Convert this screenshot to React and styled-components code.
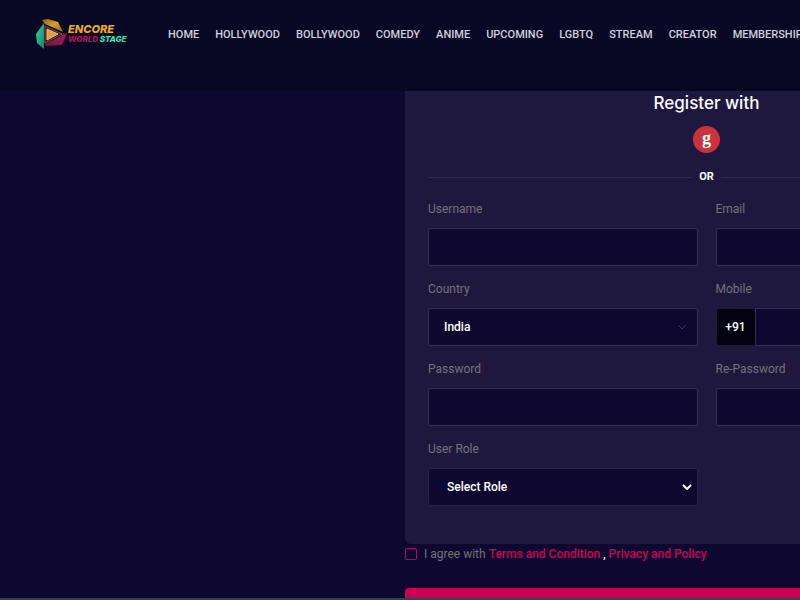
import React from "react";
import styled, { createGlobalStyle } from "styled-components";

const GlobalStyle = createGlobalStyle`
  *, *::before, *::after { box-sizing: border-box; }
  body {
    margin: 0;
    background: #0e0830;
    color: #fff;
    font-family: Roboto, "Liberation Sans", sans-serif;
    font-size: 12px;
  }
`;

const Page = styled.div`
  display: flex;
  flex-direction: column;
  height: 100vh;
  overflow: hidden;
`;

const Header = styled.header`
  display: flex;
  align-items: flex-start;
  flex: none;
  height: 91px;
  padding: 14px 36px;
  background: #080724;
`;

const Logo = styled.a`
  display: flex;
  align-items: center;
  flex: none;
  width: 132px;
  height: 40px;
  text-decoration: none;
`;

const LogoMark = styled.svg`
  flex: none;
  width: 32px;
  height: 32px;
`;

const LogoWords = styled.span`
  display: flex;
  flex-direction: column;
  font-family: Inter, "Open Sans", sans-serif;
  font-style: italic;
  font-weight: 800;
  white-space: nowrap;
`;

const LogoLine = styled.span`
  font-size: ${(p) => (p.$small ? 8 : 11)}px;
  line-height: ${(p) => (p.$small ? 9 : 11)}px;
  color: ${(p) => p.$color};
`;

const Accent = styled.span`
  color: #2eeaa5;
`;

const Nav = styled.nav`
  display: flex;
  align-items: center;
  gap: 16px;
  height: 41px;
`;

const NavLink = styled.a`
  color: #d3d1de;
  font-size: 11px;
  font-weight: 500;
  line-height: 16px;
  text-decoration: none;
  white-space: nowrap;
`;

const Main = styled.main`
  display: flex;
  justify-content: center;
  flex: 1;
  min-width: 1413px;
  min-height: 0;
  overflow: hidden;
`;

const Form = styled.form`
  width: 603px;
`;

const Card = styled.section`
  padding: 0 23px 38px;
  background: #1e183e;
  border-radius: 0 0 6px 6px;
`;

const Title = styled.h1`
  margin: 0;
  font-family: Inter, "Open Sans", sans-serif;
  font-size: 17px;
  font-weight: 500;
  line-height: 24px;
  text-align: center;
`;

const SocialButton = styled.button`
  display: block;
  width: 27px;
  height: 27px;
  margin: 11px auto 0;
  padding: 0 0 4px;
  border: 0;
  border-radius: 50%;
  background: #ca333a;
  color: #fff;
  font-family: "Liberation Serif", serif;
  font-size: 18px;
  font-weight: 700;
  line-height: 20px;
`;

const Divider = styled.div`
  display: flex;
  align-items: center;
  gap: 7px;
  margin: 16px 0;
  font-size: 11px;
  font-weight: 700;
  line-height: 16px;

  &::before,
  &::after {
    content: "";
    flex: 1;
    height: 1px;
    background: #2d274c;
  }
`;

const Fields = styled.div`
  display: grid;
  grid-template-columns: 1fr 1fr;
  gap: 15px 18px;
`;

const Field = styled.div`
  display: flex;
  flex-direction: column;
  gap: 11px;
`;

const Label = styled.label`
  color: #75727a;
  line-height: 16px;
`;

const Control = styled.input`
  width: 100%;
  min-width: 0;
  height: 38px;
  padding: 0 15px;
  border: 1px solid #342e54;
  border-radius: ${(p) => (p.$joined ? "0 3px 3px 0" : "3px")};
  background: #0e0830;
  color: #fff;
  font: 500 12px Roboto, sans-serif;
`;

const SelectBox = styled.div`
  display: grid;
  align-items: center;

  & > * { grid-area: 1 / 1; }
`;

const Select = styled(Control).attrs({ as: "select" })`
  appearance: none;
  padding: 0 ${(p) => (p.$inset ? 18 : 15)}px;
  border-color: ${(p) => (p.$inset ? "#28224a" : "#342e54")};
`;

const Chevron = styled.svg`
  justify-self: end;
  width: 10px;
  height: 6px;
  margin-right: ${(p) => (p.$strong ? 6 : 11)}px;
  fill: none;
  stroke: ${(p) => (p.$strong ? "#fff" : "#3c365c")};
  stroke-width: ${(p) => (p.$strong ? 2 : 1)};
  pointer-events: none;
`;

const PhoneGroup = styled.div`
  display: flex;
`;

const DialCode = styled.span`
  display: flex;
  align-items: center;
  justify-content: center;
  flex: none;
  width: 39px;
  height: 38px;
  border: 1px solid #1d173b;
  border-right: 0;
  border-radius: 3px 0 0 3px;
  background: #030210;
  font-weight: 500;
`;

const Agreement = styled.div`
  display: flex;
  align-items: center;
  gap: 7px;
  height: 20px;
  color: #75727a;
  white-space: nowrap;
`;

const Checkbox = styled.input`
  appearance: none;
  width: 12px;
  height: 12px;
  margin: 0;
  border: 1px solid #b20655;
  border-radius: 2px;

  &:checked { background: #c90056; }
`;

const PolicyLink = styled.a`
  color: #cf0058;
  font-weight: 500;
  text-decoration: none;
`;

const Comma = styled.span`
  color: #fff;
`;

const Submit = styled.button`
  width: 100%;
  height: 40px;
  margin-top: 24px;
  border: 0;
  border-radius: 4px;
  background: #c90056;
`;

const BottomEdge = styled.footer`
  flex: none;
  height: 2px;
  background: #344047;
`;

const links = [
  "HOME", "HOLLYWOOD", "BOLLYWOOD", "COMEDY", "ANIME",
  "UPCOMING", "LGBTQ", "STREAM", "CREATOR", "MEMBERSHIP",
];

function TextField({ id, label, type = "text" }) {
  return (
    <Field>
      <Label htmlFor={id}>{label}</Label>
      <Control id={id} type={type} />
    </Field>
  );
}

function SelectField({ id, label, option, strong }) {
  return (
    <Field>
      <Label htmlFor={id}>{label}</Label>
      <SelectBox>
        <Select id={id} $inset={strong}>
          <option>{option}</option>
        </Select>
        <Chevron viewBox="0 0 10 6" $strong={strong} aria-hidden="true">
          <path d="M1 1l4 4 4-4" />
        </Chevron>
      </SelectBox>
    </Field>
  );
}

export default function App() {
  return (
    <Page>
      <GlobalStyle />
      <Header>
        <Logo href="#home">
          <LogoMark viewBox="0 0 32 32" aria-hidden="true">
            <defs>
              <linearGradient id="gold" x1="0" y1="0" x2="1" y2="1">
                <stop offset="0" stopColor="#8a5b18" />
                <stop offset="0.5" stopColor="#d9a127" />
                <stop offset="1" stopColor="#8a5e18" />
              </linearGradient>
              <linearGradient id="rose" x1="0" y1="1" x2="1" y2="0">
                <stop offset="0" stopColor="#6b173f" />
                <stop offset="1" stopColor="#b01c55" />
              </linearGradient>
              <linearGradient id="mint" x1="0" y1="0" x2="1" y2="1">
                <stop offset="0" stopColor="#2ed6a0" />
                <stop offset="1" stopColor="#16836e" />
              </linearGradient>
            </defs>
            <path d="M6 2L12 1L22 4L27 14L9 6z" fill="url(#gold)" />
            <path d="M0 16L8 5V31L1 25z" fill="url(#mint)" />
            <path d="M9 26L31 15L26 27L10 28z" fill="url(#rose)" />
            <path d="M9 8V25L26 16z" fill="#211631" stroke="#8d4c37" />
            <path d="M11 11V22L22 16z" fill="#e0a03f" stroke="#f0bd68" />
          </LogoMark>
          <LogoWords>
            <LogoLine $color="#efab1c">ENCORE</LogoLine>
            <LogoLine $small $color="#ad174f">
              WORLD <Accent>STAGE</Accent>
            </LogoLine>
          </LogoWords>
        </Logo>
        <Nav aria-label="Main">
          {links.map((name) => (
            <NavLink key={name} href={`#${name.toLowerCase()}`}>{name}</NavLink>
          ))}
        </Nav>
      </Header>
      <Main>
        <Form onSubmit={(event) => event.preventDefault()}>
          <Card>
            <Title>Register with</Title>
            <SocialButton type="button" aria-label="Register with Google">g</SocialButton>
            <Divider>OR</Divider>
            <Fields>
              <TextField id="username" label="Username" />
              <TextField id="email" label="Email" type="email" />
              <SelectField id="country" label="Country" option="India" />
              <Field>
                <Label htmlFor="mobile">Mobile</Label>
                <PhoneGroup>
                  <DialCode>+91</DialCode>
                  <Control id="mobile" type="tel" $joined />
                </PhoneGroup>
              </Field>
              <TextField id="password" label="Password" type="password" />
              <TextField id="repassword" label="Re-Password" type="password" />
              <SelectField id="role" label="User Role" option="Select Role" strong />
            </Fields>
          </Card>
          <Agreement>
            <Checkbox id="agree" type="checkbox" />
            <span>
              <label htmlFor="agree">I agree with</label>{" "}
              <PolicyLink href="#terms">Terms and Condition</PolicyLink>
              <Comma> , </Comma>
              <PolicyLink href="#privacy">Privacy and Policy</PolicyLink>
            </span>
          </Agreement>
          <Submit type="submit" aria-label="Register" />
        </Form>
      </Main>
      <BottomEdge />
    </Page>
  );
}
